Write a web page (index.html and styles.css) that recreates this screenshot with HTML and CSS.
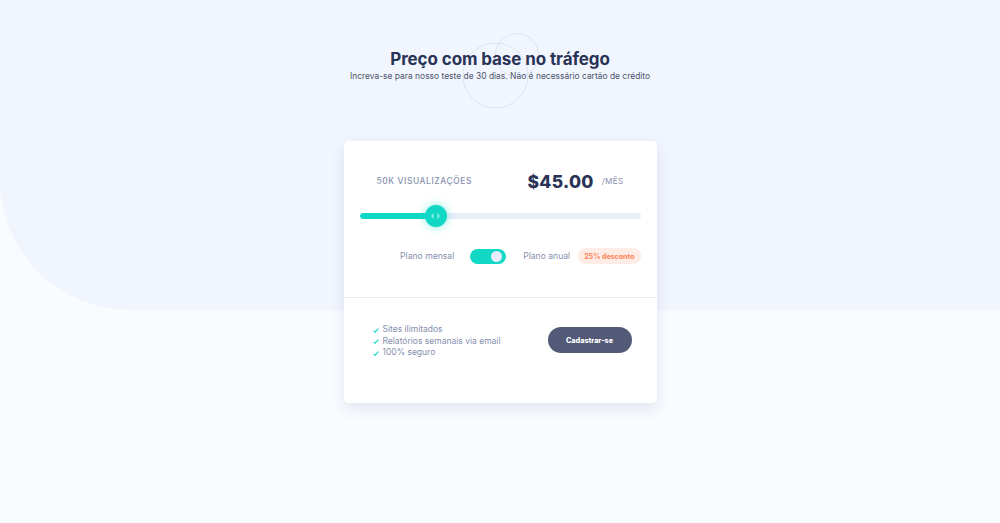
FILE: index.html
```html
<!DOCTYPE html>
<html lang="pt">
<head>
<meta charset="utf-8">
<title>Preço com base no tráfego</title>
<link rel="stylesheet" href="styles.css">
</head>
<body>
<div class="page">
  <header class="header">
    <svg class="circles" width="90" height="90" viewBox="0 0 90 90" aria-hidden="true">
      <circle cx="35.5" cy="45.5" r="32.5" fill="none" stroke="#dfe3f1" stroke-width="1"/>
      <circle cx="57" cy="25" r="21.5" fill="none" stroke="#dfe3f1" stroke-width="1"/>
    </svg>
    <h1 class="title">Preço com base no tráfego</h1>
    <p class="subtitle">Increva-se para nosso teste de 30 dias. Não é necessário cartão de crédito</p>
  </header>

  <main class="card">
    <section class="card-top">
      <div class="summary">
        <span class="views">50K VISUALIZAÇÕES</span>
        <span class="price"><strong class="amount">$45.00</strong><span class="period">/MÊS</span></span>
      </div>
      <div class="slider">
        <div class="track"><div class="fill" style="width:27%"></div></div>
        <div class="thumb">
          <svg width="9" height="6" viewBox="0 0 9 6" aria-hidden="true">
            <path d="M2.6 0 L0 3 L2.6 6 Z M6.4 0 L9 3 L6.4 6 Z" fill="#8ff0e5"/>
          </svg>
        </div>
      </div>
      <div class="billing">
        <span class="billing-label">Plano mensal</span>
        <span class="toggle"><span class="knob"></span></span>
        <span class="billing-label annual">Plano anual</span>
        <span class="badge">25% desconto</span>
      </div>
    </section>
    <section class="card-bottom">
      <ul class="features">
        <li><svg class="check" width="6" height="5" viewBox="0 0 6 5" aria-hidden="true"><path d="M0.6 2.8 L2.1 4.2 L5.4 0.7" fill="none" stroke="#10d8c4" stroke-width="1.1"/></svg>Sites ilimitados</li>
        <li><svg class="check" width="6" height="5" viewBox="0 0 6 5" aria-hidden="true"><path d="M0.6 2.8 L2.1 4.2 L5.4 0.7" fill="none" stroke="#10d8c4" stroke-width="1.1"/></svg>Relatórios semanais via email</li>
        <li><svg class="check" width="6" height="5" viewBox="0 0 6 5" aria-hidden="true"><path d="M0.6 2.8 L2.1 4.2 L5.4 0.7" fill="none" stroke="#10d8c4" stroke-width="1.1"/></svg>100% seguro</li>
      </ul>
      <button class="cta">Cadastrar-se</button>
    </section>
  </main>
</div>
</body>
</html>
```

FILE: styles.css
```css
* { box-sizing: border-box; }

html, body {
  margin: 0;
  padding: 0;
}

body {
  background: #fafbff;
  font-family: Inter, "Noto Sans", "Liberation Sans", sans-serif;
  color: #858fad;
}

.page {
  position: relative;
  min-height: 523px;
  display: flex;
  flex-direction: column;
  align-items: center;
}

.page::before {
  content: "";
  position: absolute;
  left: 0;
  top: 0;
  width: 100%;
  height: 310px;
  background: #f1f5fe;
  border-bottom-left-radius: 130px;
  z-index: 0;
}

.header {
  position: relative;
  z-index: 1;
  padding-top: 48px;
  text-align: center;
}

.circles {
  position: absolute;
  left: 50%;
  top: 30px;
  margin-left: -40px;
  z-index: -1;
}

.title {
  margin: 0;
  font-size: 17px;
  line-height: 22px;
  font-weight: 700;
  color: #293356;
  letter-spacing: -0.1px;
}

.subtitle {
  margin: 0;
  font-size: 8.45px;
  line-height: 12px;
  color: #4e556d;
}

.card {
  position: relative;
  z-index: 1;
  margin-top: 59px;
  width: 313px;
  background: #fff;
  border-radius: 5px;
  box-shadow: 0 6px 14px rgba(60, 80, 130, 0.12);
}

.card-top {
  padding: 28px 16px 33px;
  border-bottom: 1px solid #e6e9f2;
}

.summary {
  display: flex;
  align-items: center;
  justify-content: space-between;
  height: 24px;
  padding: 0 17px;
}

.views {
  font-size: 8.4px;
  letter-spacing: 0.6px;
  font-weight: 500;
  color: #858fad;
}

.price {
  display: flex;
  align-items: center;
  gap: 8px;
}

.amount {
  font-size: 17.5px;
  font-weight: 800;
  color: #293356;
  letter-spacing: 0.3px;
}

.period {
  font-size: 8.2px;
  color: #858fad;
  letter-spacing: 0.3px;
}

.slider {
  position: relative;
  margin-top: 12px;
  height: 22px;
  display: flex;
  align-items: center;
}

.track {
  width: 100%;
  height: 6px;
  border-radius: 3px;
  background: #eaeefb;
  overflow: hidden;
}

.fill {
  height: 100%;
  background: #10d8c4;
  border-radius: 3px;
}

.thumb {
  position: absolute;
  left: 65px;
  top: 0;
  width: 22px;
  height: 22px;
  border-radius: 50%;
  background: #10d8c4;
  box-shadow: 0 0 8px rgba(16, 216, 196, 0.55);
  display: flex;
  align-items: center;
  justify-content: center;
}

.billing {
  margin-top: 21px;
  display: flex;
  align-items: center;
  justify-content: flex-end;
  height: 16px;
}

.billing-label {
  font-size: 8.6px;
  color: #858fad;
}

.toggle {
  margin: 0 17px 0 16px;
  width: 36px;
  height: 15px;
  border-radius: 8px;
  background: #10d8c4;
  display: flex;
  align-items: center;
  justify-content: flex-end;
  padding-right: 4px;
}

.knob {
  width: 11px;
  height: 11px;
  border-radius: 50%;
  background: #e9edfb;
}

.badge {
  margin-left: 8px;
  height: 16px;
  padding: 0 6px;
  border-radius: 8px;
  background: #feece7;
  color: #ff8c66;
  font-size: 7px;
  font-weight: 800;
  display: flex;
  align-items: center;
}

.card-bottom {
  display: flex;
  align-items: flex-start;
  justify-content: space-between;
  padding: 26px 25px 44px 29px;
}

.features {
  list-style: none;
  margin: 0;
  padding: 0;
}

.features li {
  display: flex;
  align-items: center;
  gap: 4px;
  font-size: 8.5px;
  line-height: 11.5px;
  color: #858fad;
}

.check {
  flex: none;
  margin-top: 1px;
}

.cta {
  margin-top: 3px;
  width: 84px;
  height: 26px;
  border: none;
  border-radius: 13px;
  background: #525a78;
  color: #fff;
  font-family: inherit;
  font-size: 7.2px;
  font-weight: 800;
  padding: 0;
}
```
